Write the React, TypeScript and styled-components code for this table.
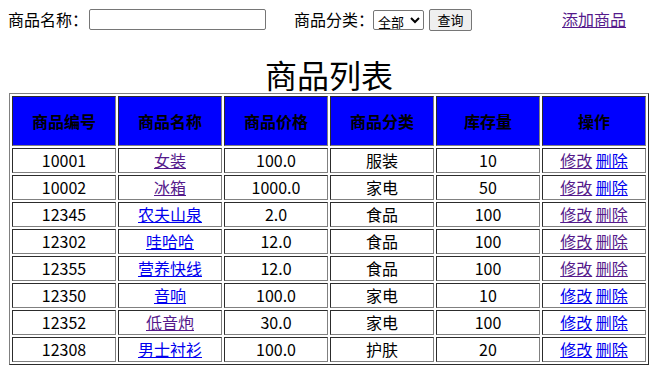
import styled, { createGlobalStyle } from 'styled-components'

const GlobalStyle = createGlobalStyle`
  body {
    margin: 8px;
    font-family: "Noto Sans CJK SC", "Noto Sans", sans-serif;
    font-size: 16px;
    color: #000;
    background: #fff;
  }
`

const SearchBar = styled.form`
  display: flex;
  align-items: center;
  height: 23px;
  margin: 0;
`

const Label = styled.span`
  line-height: 23px;
`

const NameInput = styled.input`
  box-sizing: border-box;
  width: 177px;
  height: 21px;
  margin: 0 28px 0 1px;
  border: 1px solid #767676;
  border-radius: 2px;
  padding: 1px 2px;
`

const CategorySelect = styled.select`
  box-sizing: border-box;
  width: 51px;
  height: 20px;
  margin: 0 5px 0 -1px;
  padding: 0;
  border: 1px solid #767676;
  border-radius: 2px;
  background: #fff;
  font-family: "Noto Sans CJK SC", sans-serif;
  font-size: 13px;
  color: #000;
`

const QueryButton = styled.button`
  box-sizing: border-box;
  width: 43px;
  height: 22px;
  padding: 0;
  border: 1px solid #767676;
  border-radius: 2px;
  background: #efefef;
  font-family: "Noto Sans CJK SC", sans-serif;
  font-size: 13px;
  color: #000;
`

const AddLink = styled.a<{ $visited?: boolean }>`
  margin-left: 90px;
  line-height: 23px;
  color: ${(p) => (p.$visited ? '#551a8b' : '#0000ee')};
`

const Title = styled.h1`
  margin: 27px 0 3px;
  font-size: 32px;
  font-weight: normal;
  line-height: 32px;
  text-align: center;
`

const GoodsTable = styled.table`
  width: 640px;
  margin: 0 auto;
  table-layout: fixed;
  border-collapse: separate;
  border-spacing: 2px;
  border: 1px outset #808080;
  text-align: center;
`

const HeadCell = styled.th`
  padding: 1px;
  border: 1px inset #808080;
  background: #0000ff;
  color: #000;
  font-weight: bold;
  line-height: 46px;
`

const Cell = styled.td`
  padding: 1px;
  border: 1px inset #808080;
  line-height: 21px;
`

const RowLink = styled.a<{ $visited?: boolean }>`
  color: ${(p) => (p.$visited ? '#551a8b' : '#0000ee')};
`

const heads = ['商品编号', '商品名称', '商品价格', '商品分类', '库存量', '操作']

type Goods = {
  id: string
  name: string
  price: string
  type: string
  stock: number
  seenName?: boolean
  seenEdit?: boolean
  seenDelete?: boolean
}

const goods: Goods[] = [
  { id: '10001', name: '女装', price: '100.0', type: '服装', stock: 10, seenName: true, seenEdit: true },
  { id: '10002', name: '冰箱', price: '1000.0', type: '家电', stock: 50, seenName: true, seenEdit: true },
  { id: '12345', name: '农夫山泉', price: '2.0', type: '食品', stock: 100, seenEdit: true, seenDelete: true },
  { id: '12302', name: '哇哈哈', price: '12.0', type: '食品', stock: 100, seenEdit: true, seenDelete: true },
  { id: '12355', name: '营养快线', price: '12.0', type: '食品', stock: 100, seenEdit: true, seenDelete: true },
  { id: '12350', name: '音响', price: '100.0', type: '家电', stock: 10 },
  { id: '12352', name: '低音炮', price: '30.0', type: '家电', stock: 100, seenName: true },
  { id: '12308', name: '男士衬衫', price: '100.0', type: '护肤', stock: 20 },
]

const App = () => {
  return (
    <>
      <GlobalStyle />
      <SearchBar onSubmit={(e) => e.preventDefault()}>
        <Label>商品名称：</Label>
        <NameInput type="text" />
        <Label>商品分类：</Label>
        <CategorySelect defaultValue="all">
          <option value="all">全部</option>
          <option value="clothes">服装</option>
          <option value="food">食品</option>
          <option value="home">家电</option>
        </CategorySelect>
        <QueryButton type="submit">查询</QueryButton>
        <AddLink href="#add" $visited>
          添加商品
        </AddLink>
      </SearchBar>
      <Title>商品列表</Title>
      <GoodsTable>
        <thead>
          <tr>
            {heads.map((h) => (
              <HeadCell key={h}>{h}</HeadCell>
            ))}
          </tr>
        </thead>
        <tbody>
          {goods.map((g) => (
            <tr key={g.id}>
              <Cell>{g.id}</Cell>
              <Cell>
                <RowLink href="#detail" $visited={g.seenName}>
                  {g.name}
                </RowLink>
              </Cell>
              <Cell>{g.price}</Cell>
              <Cell>{g.type}</Cell>
              <Cell>{g.stock}</Cell>
              <Cell>
                <RowLink href="#edit" $visited={g.seenEdit}>
                  修改
                </RowLink>{' '}
                <RowLink href="#delete" $visited={g.seenDelete}>
                  删除
                </RowLink>
              </Cell>
            </tr>
          ))}
        </tbody>
      </GoodsTable>
    </>
  )
}

export default App
